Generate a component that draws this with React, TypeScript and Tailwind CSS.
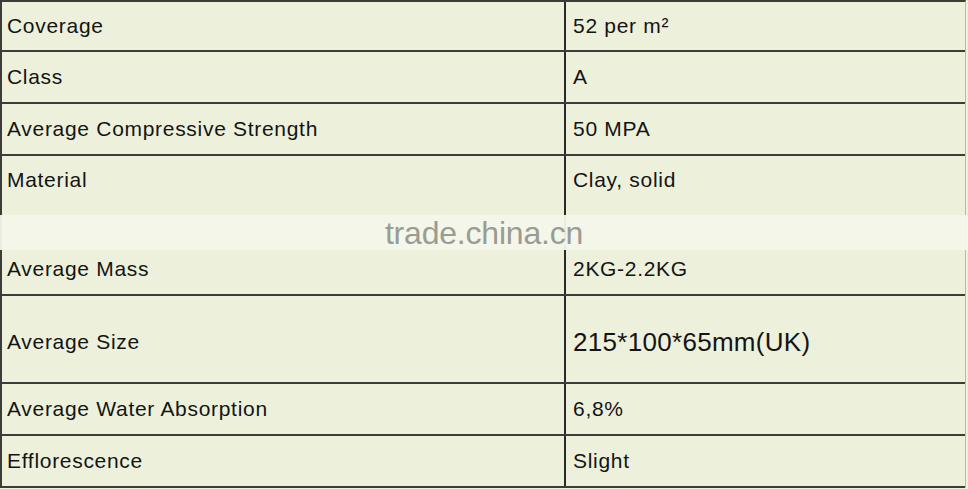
const rows: { label: string; value: string; h: string; top?: boolean; big?: boolean }[] = [
  { label: "Coverage", value: "52 per m²", h: "h-[50px]" },
  { label: "Class", value: "A", h: "h-[52px]" },
  { label: "Average Compressive Strength", value: "50 MPA", h: "h-[52px]" },
  { label: "Material", value: "Clay, solid", h: "h-[88px]", top: true },
  { label: "Average Mass", value: "2KG-2.2KG", h: "h-[52px]" },
  { label: "Average Size", value: "215*100*65mm(UK)", h: "h-[88px]", big: true },
  { label: "Average Water Absorption", value: "6,8%", h: "h-[52px]" },
  { label: "Efflorescence", value: "Slight", h: "h-[52px]" },
];

export default function App() {
  return (
    <div
      className="relative w-[968px] h-[489px] overflow-hidden bg-[#edf1dc] text-[#141414]"
      style={{ fontFamily: '"Liberation Sans", Arial, sans-serif' }}
    >
      <div className="border-t-2 border-l-2 border-r border-[#3c3d38] border-r-[#b9bcab] w-[966px]">
        {rows.map((r) => (
          <div
            key={r.label}
            className={`flex border-b-2 ${r.top ? "border-transparent" : "border-[#3c3d38]"} ${r.h}`}
          >
            <div
              className={`w-[564px] border-r-2 border-[#2a2a2a] pl-[5px] text-[21px] tracking-[0.7px] leading-[22px] flex ${
                r.top ? "items-start pt-[13px]" : r.big ? "items-center pt-[6px]" : "items-center"
              }`}
            >
              {r.label}
            </div>
            <div
              className={`flex-1 pl-[7px] flex leading-[22px] ${
                r.big ? "text-[26px] tracking-[0.3px] items-center pt-[6px]" : "text-[21px] tracking-[0.7px]"
              } ${r.top ? "items-start pt-[13px]" : "items-center"}`}
            >
              {r.value}
            </div>
          </div>
        ))}
      </div>
      <div className="absolute left-0 right-0 top-[215px] h-[35px] bg-[#f3f6e8]/95 flex items-center justify-center">
        <span className="text-[32px] leading-none text-[#9a9c94] tracking-[-0.2px]">trade.china.cn</span>
      </div>
    </div>
  );
}
